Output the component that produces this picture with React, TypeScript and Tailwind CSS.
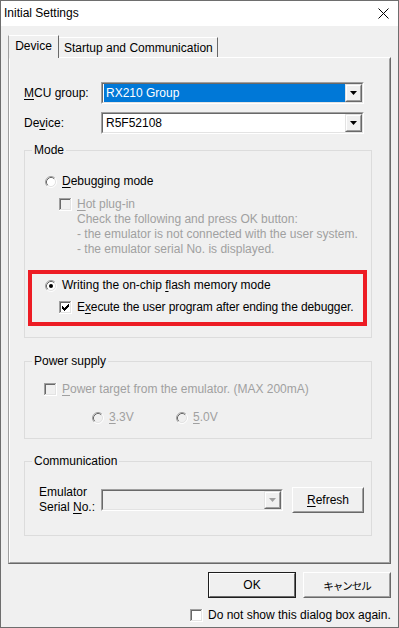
import React from "react";

function Radio({ checked = false, disabled = false }: { checked?: boolean; disabled?: boolean }) {
  return (
    <svg width="12" height="12" viewBox="0 0 12 12" className="shrink-0 block">
      <circle cx="6" cy="6" r="4.5" fill={disabled ? "#f0f0f0" : "#ffffff"} />
      <path d="M2.11 9.89 A5.5 5.5 0 0 1 9.89 2.11" stroke="#a0a0a0" fill="none" />
      <path d="M9.89 2.11 A5.5 5.5 0 0 1 2.11 9.89" stroke="#ffffff" fill="none" />
      <path d="M2.82 9.18 A4.5 4.5 0 0 1 9.18 2.82" stroke="#696969" fill="none" />
      <path d="M9.18 2.82 A4.5 4.5 0 0 1 2.82 9.18" stroke="#e3e3e3" fill="none" />
      {checked && <circle cx="6" cy="6" r="2" fill="#000000" />}
    </svg>
  );
}

function Check({ checked = false, disabled = false }: { checked?: boolean; disabled?: boolean }) {
  const cols: [number, number][] = [
    [3, 5],
    [4, 6],
    [5, 7],
    [6, 6],
    [7, 5],
    [8, 4],
    [9, 3],
  ];
  return (
    <svg width="13" height="13" viewBox="0 0 13 13" className="shrink-0 block" shapeRendering="crispEdges">
      <rect x="0" y="0" width="13" height="13" fill="#ffffff" />
      <rect x="0" y="0" width="12" height="1" fill="#a0a0a0" />
      <rect x="0" y="0" width="1" height="12" fill="#a0a0a0" />
      <rect x="1" y="1" width="10" height="1" fill="#696969" />
      <rect x="1" y="1" width="1" height="10" fill="#696969" />
      <rect x="1" y="11" width="11" height="1" fill="#e3e3e3" />
      <rect x="11" y="1" width="1" height="11" fill="#e3e3e3" />
      <rect x="2" y="2" width="9" height="9" fill={disabled ? "#f0f0f0" : "#ffffff"} />
      {checked &&
        cols.map(([x, y]) => <rect key={x} x={x} y={y} width="1" height="3" fill="#000000" />)}
    </svg>
  );
}

function DropBtn({ disabled = false }: { disabled?: boolean }) {
  return (
    <div className="w-[17px] h-full shrink-0 border border-t-[#e3e3e3] border-l-[#e3e3e3] border-r-[#696969] border-b-[#696969]">
      <div className="w-full h-full bg-[#f0f0f0] border border-t-white border-l-white border-r-[#a0a0a0] border-b-[#a0a0a0] flex items-center justify-center">
        <svg width="7" height="4" viewBox="0 0 7 4" className="block">
          <polygon points="0,0 7,0 3.5,4" fill={disabled ? "#a0a0a0" : "#000000"} />
        </svg>
      </div>
    </div>
  );
}

function GroupLabel({ children }: { children: React.ReactNode }) {
  return (
    <span className="absolute left-[7px] top-[-8px] bg-[#f0f0f0] px-[2px] leading-[15px]">{children}</span>
  );
}

export default function App() {
  return (
    <div className="w-[399px] h-[628px] bg-[#f0f0f0] border border-[#6e6e6e] flex flex-col text-[12px] leading-[15px] text-black font-['Liberation_Sans','Noto_Sans_CJK_JP',sans-serif] overflow-hidden">
      {/* title bar */}
      <div className="h-[25px] shrink-0 bg-white flex items-center justify-between pl-[3px] pr-[9px]">
        <span>Initial Settings</span>
        <svg width="11" height="11" viewBox="0 0 11 11" className="block">
          <path d="M0.5 0.5 L10.5 10.5 M10.5 0.5 L0.5 10.5" stroke="#000000" strokeWidth="1" />
        </svg>
      </div>

      <div className="flex-1 flex flex-col px-[7px] pt-[9px]">
        {/* tabs */}
        <div className="flex items-end h-[22px] relative z-10">
          <div className="h-[23px] w-[51px] -mb-[1px] bg-[#f0f0f0] border-t border-l border-r border-t-white border-l-[#a0a0a0] border-r-[#696969] flex items-start justify-center pt-[3px]">
            <span>Device</span>
          </div>
          <div className="h-[20px] w-[159px] border-t border-r border-t-white border-r-[#696969] flex items-start pl-[5px] pt-[3px]">
            <span>Startup and Communication</span>
          </div>
        </div>

        {/* panel */}
        <div className="h-[507px] border border-t-white border-l-[#a0a0a0] border-r-[#696969] border-b-[#696969]">
          <div className="h-full border border-t-[#f0f0f0] border-l-white border-r-[#a0a0a0] border-b-[#a0a0a0] pl-[14px] pr-[17px] pt-[23px] flex flex-col">
            {/* MCU group */}
            <div className="flex items-center h-[22px]">
              <span className="w-[77px]">
                <span className="underline underline-offset-[2px]">M</span>CU group:
              </span>
              <div className="w-[263px] h-[22px] border border-t-[#a0a0a0] border-l-[#a0a0a0] border-r-white border-b-white">
                <div className="h-full border border-t-[#696969] border-l-[#696969] border-r-[#e3e3e3] border-b-[#e3e3e3] bg-white flex">
                  <div className="flex-1 ml-[1px] bg-[#0078d7] text-white flex items-center pl-[2px]">RX210 Group</div>
                  <DropBtn />
                </div>
              </div>
            </div>
            {/* Device */}
            <div className="flex items-center h-[22px] mt-[8px]">
              <span className="w-[77px]">
                De<span className="underline underline-offset-[2px]">v</span>ice:
              </span>
              <div className="w-[263px] h-[22px] border border-t-[#a0a0a0] border-l-[#a0a0a0] border-r-white border-b-white">
                <div className="h-full border border-t-[#696969] border-l-[#696969] border-r-[#e3e3e3] border-b-[#e3e3e3] bg-white flex">
                  <div className="flex-1 flex items-center pl-[3px]">R5F52108</div>
                  <DropBtn />
                </div>
              </div>
            </div>

            {/* Mode */}
            <div className="relative mt-[16px] h-[188px] border border-[#dcdcdc] flex flex-col pt-[23px]">
              <GroupLabel>Mode</GroupLabel>
              <div className="flex items-center h-[15px] pl-[20px] gap-[5px]">
                <Radio />
                <span>
                  <span className="underline underline-offset-[2px]">D</span>ebugging mode
                </span>
              </div>
              <div className="flex items-start mt-[8px] pl-[34px] gap-[5px] text-[#a0a0a0]">
                <div className="pt-[1px]">
                  <Check disabled />
                </div>
                <div className="flex flex-col">
                  <span>
                    <span className="underline underline-offset-[2px]">H</span>ot plug-in
                  </span>
                  <span>Check the following and press OK button:</span>
                  <span>- the emulator is not connected with the user system.</span>
                  <span>- the emulator serial No. is displayed.</span>
                </div>
              </div>
              <div className="mt-[13px] ml-[3px] w-[339px] h-[56px] border-[4px] border-[#ed1c24] flex flex-col pt-[4px]">
                <div className="flex items-center h-[15px] pl-[13px] gap-[5px]">
                  <Radio checked />
                  <span>
                    Writing the on-chip <span className="underline underline-offset-[2px]">f</span>lash memory mode
                  </span>
                </div>
                <div className="flex items-center h-[15px] mt-[7px] pl-[27px] gap-[5px]">
                  <Check checked />
                  <span className="tracking-[-0.1px]">
                    E<span className="underline underline-offset-[2px]">x</span>ecute the user program after ending the debugger.
                  </span>
                </div>
              </div>
            </div>

            {/* Power supply */}
            <div className="relative mt-[23px] h-[78px] border border-[#dcdcdc] flex flex-col pt-[20px] text-[#a0a0a0]">
              <GroupLabel>
                <span className="text-black">Power supply</span>
              </GroupLabel>
              <div className="flex items-center h-[15px] pl-[19px] gap-[5px]">
                <Check disabled />
                <span>
                  <span className="underline underline-offset-[2px]">P</span>ower target from the emulator. (MAX 200mA)
                </span>
              </div>
              <div className="flex items-center h-[15px] mt-[13px] pl-[67px]">
                <div className="flex items-center gap-[5px] w-[84px]">
                  <Radio disabled />
                  <span>
                    <span className="underline underline-offset-[2px]">3</span>.3V
                  </span>
                </div>
                <div className="flex items-center gap-[5px]">
                  <Radio disabled />
                  <span>
                    <span className="underline underline-offset-[2px]">5</span>.0V
                  </span>
                </div>
              </div>
            </div>

            {/* Communication */}
            <div className="relative mt-[22px] h-[75px] border border-[#dcdcdc] flex items-start pt-[23px] pl-[14px]">
              <GroupLabel>Communication</GroupLabel>
              <div className="w-[62px] flex flex-col">
                <span>Emulator</span>
                <span>
                  Serial <span className="underline underline-offset-[2px]">N</span>o.:
                </span>
              </div>
              <div className="mt-[4px] w-[182px] h-[22px] border border-t-[#a0a0a0] border-l-[#a0a0a0] border-r-white border-b-white">
                <div className="h-full border border-t-[#696969] border-l-[#696969] border-r-[#e3e3e3] border-b-[#e3e3e3] bg-[#f0f0f0] flex">
                  <div className="flex-1" />
                  <DropBtn disabled />
                </div>
              </div>
              <div className="mt-[2px] ml-[9px] w-[72px] h-[26px] border border-t-white border-l-white border-r-[#696969] border-b-[#696969]">
                <div className="h-full border border-t-[#f0f0f0] border-l-[#f0f0f0] border-r-[#a0a0a0] border-b-[#a0a0a0] flex items-center justify-center">
                  <span>
                    <span className="underline underline-offset-[2px]">R</span>efresh
                  </span>
                </div>
              </div>
            </div>
          </div>
        </div>

        {/* buttons */}
        <div className="flex justify-end gap-[7px] mt-[8px]">
          <div className="w-[88px] h-[26px] border border-[#1e1e1e]">
            <div className="h-full border border-t-white border-l-white border-r-[#696969] border-b-[#696969] flex items-center justify-center">
              <span>OK</span>
            </div>
          </div>
          <div className="w-[88px] h-[26px] border border-t-white border-l-white border-r-[#696969] border-b-[#696969]">
            <div className="h-full border border-t-[#f0f0f0] border-l-[#f0f0f0] border-r-[#a0a0a0] border-b-[#a0a0a0] flex items-center justify-center">
              <span className="font-['Noto_Sans_CJK_JP',sans-serif] text-[10.5px] tracking-[-1px]">キャンセル</span>
            </div>
          </div>
        </div>

        {/* do not show */}
        <div className="flex items-center h-[15px] mt-[10px] pl-[182px] gap-[5px]">
          <Check />
          <span>Do not show this dialog box again.</span>
        </div>
      </div>
    </div>
  );
}
